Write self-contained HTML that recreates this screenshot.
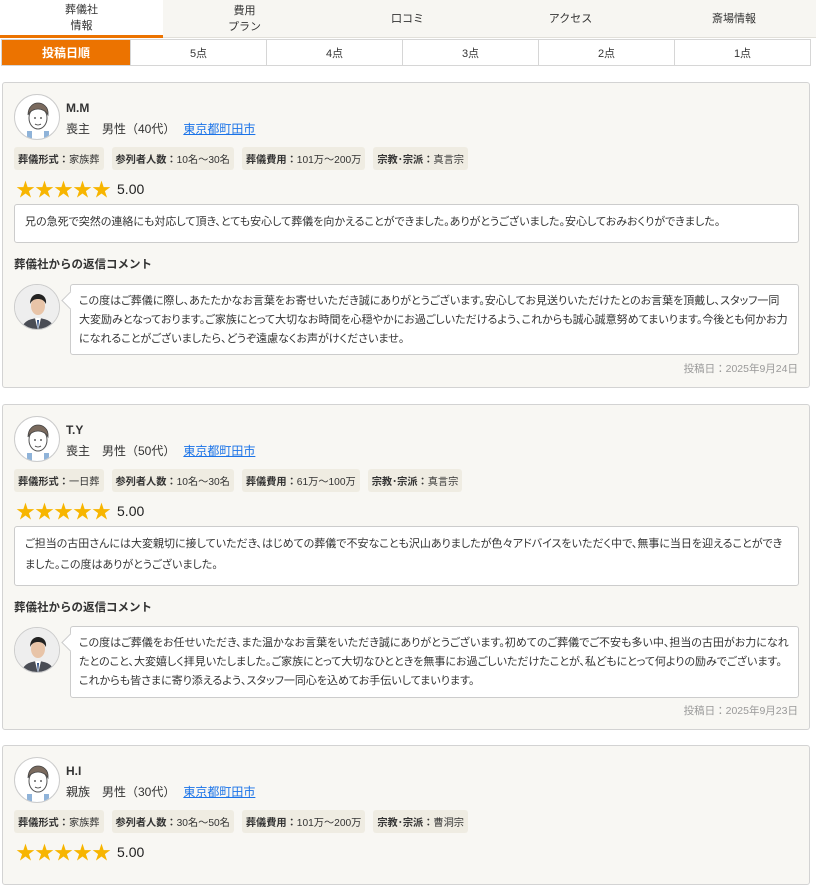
<!DOCTYPE html>
<html><head><meta charset="utf-8"><style>
*{box-sizing:border-box;margin:0;padding:0}
body{width:816px;height:867px;overflow:hidden;background:#fff;font-family:"Liberation Sans","Noto Sans CJK JP",sans-serif;color:#333;font-size:12px;position:relative}
.tabs{position:absolute;left:0;top:0;width:816px;height:38px;background:#f7f6f2;border-bottom:1px solid #e2e0da}
.tab{position:absolute;top:0;height:38px;display:flex;align-items:center;justify-content:center;text-align:center;font-size:11px;line-height:16px;color:#333}
.tab.act{background:#fff;border-bottom:3px solid #ec7300}
.sort{position:absolute;left:1px;top:39px;width:810px;height:27px;display:flex;border:1px solid #d6d6d6;background:#fff}
.sort div{flex:1;display:flex;align-items:center;justify-content:center;font-size:11px;border-left:1px solid #d6d6d6;color:#333}
.sort div.on{flex:0 0 128px;background:#ec7300;color:#fff;font-weight:bold;font-size:12px;border-left:none}
.card{position:absolute;left:2px;width:808px;background:#f8f7f3;border:1px solid #d3d3d3;border-radius:3px}
.av{position:absolute;left:11px;width:46px;height:46px;border-radius:50%;background:#fff;border:1px solid #ccc;overflow:hidden}
.name{position:absolute;left:63px;font-size:12px;font-weight:bold;color:#333}
.meta{position:absolute;left:63px;font-size:12px;color:#333}
.meta a{color:#1a73e8;text-decoration:underline;margin-left:8px}
.tags{position:absolute;left:11px;display:flex;gap:8px}
.tag{background:#efece2;border-radius:3px;height:23px;padding:0 4px;display:flex;align-items:center;font-size:10.2px;color:#333}
.tag b{font-weight:bold}
.stars{position:absolute;left:13px;display:flex;align-items:center;color:#f7b500;font-size:19px}
.stars span{font-size:14px;color:#222;margin-left:6px}
.box{position:absolute;left:11px;width:785px;background:#fff;border:1px solid #ccc;border-radius:3px;padding:8px 10px;font-size:11px;line-height:21px;color:#333;font-feature-settings:"palt"}
.rt{position:absolute;left:11px;font-size:11.5px;font-weight:bold;color:#333}
.bub{position:absolute;left:67px;width:729px;background:#fff;border:1px solid #ccc;border-radius:3px;padding:7px 8px;font-size:11px;line-height:19px;color:#333;font-feature-settings:"palt"}
.bub:before{content:"";position:absolute;left:-7px;top:9px;width:12px;height:12px;background:#fff;border-left:1px solid #ccc;border-bottom:1px solid #ccc;transform:rotate(45deg)}
.date{position:absolute;right:11px;font-size:10.5px;color:#999}
</style></head><body>
<div class="tabs">
<div class="tab act" style="left:0;width:163px">葬儀社<br>情報</div>
<div class="tab" style="left:163px;width:163px">費用<br>プラン</div>
<div class="tab" style="left:326px;width:163px">口コミ</div>
<div class="tab" style="left:489px;width:163px">アクセス</div>
<div class="tab" style="left:652px;width:164px">斎場情報</div>
</div>
<div class="sort"><div class="on">投稿日順</div><div>5点</div><div>4点</div><div>3点</div><div>2点</div><div>1点</div></div>

<div class="card" style="top:82px;height:306px">
<div class="av" style="top:11px"><svg width="46" height="46" viewBox="0 0 46 46"><rect x="12" y="36" width="22" height="12" fill="#8fb3d9"/><path d="M17 34h12v14H17z" fill="#fff"/><ellipse cx="23" cy="23" rx="9" ry="11" fill="#fff" stroke="#555" stroke-width="1"/><path d="M13 20c0-9 6-12 10-12s11 3 10 12c-2-4-6-6-10-6s-8 2-10 6z" fill="#7a6a5e" stroke="#444" stroke-width=".8"/><circle cx="20" cy="23" r=".9" fill="#333"/><circle cx="26" cy="23" r=".9" fill="#333"/><path d="M20 29q3 2 6 0" stroke="#333" fill="none" stroke-width=".8"/></svg></div>
<div class="name" style="top:18px">M.M</div>
<div class="meta" style="top:37px">喪主　男性（40代）<a>東京都町田市</a></div>
<div class="tags" style="top:64px"><div class="tag"><b>葬儀形式：</b>家族葬</div><div class="tag"><b>参列者人数：</b>10名～30名</div><div class="tag"><b>葬儀費用：</b>101万～200万</div><div class="tag"><b>宗教･宗派：</b>真言宗</div></div>
<div class="stars" style="top:92px">★★★★★<span>5.00</span></div>
<div class="box" style="top:121px;height:39px;padding-top:7px">兄の急死で突然の連絡にも対応して頂き、とても安心して葬儀を向かえることができました。ありがとうございました。安心しておみおくりができました。</div>
<div class="rt" style="top:173px">葬儀社からの返信コメント</div>
<div class="av" style="top:201px"><svg width="46" height="46" viewBox="0 0 46 46"><rect width="46" height="46" fill="#eee"/><path d="M6 46c2-10 8-12 17-13 9 1 15 3 17 13z" fill="#4a4d55"/><path d="M20 33l3 13 3-13z" fill="#fff"/><path d="M22 35h2l-1 11z" fill="#2a4a80"/><ellipse cx="23" cy="21" rx="7" ry="9" fill="#e8c4a8"/><path d="M15 19c0-7 4-10 8-10s9 3 8 10c-2-4-5-5-8-5s-6 1-8 5z" fill="#222"/></svg></div>
<div class="bub" style="top:201px;height:71px">この度はご葬儀に際し、あたたかなお言葉をお寄せいただき誠にありがとうございます。安心してお見送りいただけたとのお言葉を頂戴し、スタッフ一同大変励みとなっております。ご家族にとって大切なお時間を心穏やかにお過ごしいただけるよう、これからも誠心誠意努めてまいります。今後とも何かお力になれることがございましたら、どうぞ遠慮なくお声がけくださいませ。</div>
<div class="date" style="top:278px">投稿日：2025年9月24日</div>
</div>

<div class="card" style="top:404px;height:326px">
<div class="av" style="top:11px"><svg width="46" height="46" viewBox="0 0 46 46"><rect x="12" y="36" width="22" height="12" fill="#8fb3d9"/><path d="M17 34h12v14H17z" fill="#fff"/><ellipse cx="23" cy="23" rx="9" ry="11" fill="#fff" stroke="#555" stroke-width="1"/><path d="M13 20c0-9 6-12 10-12s11 3 10 12c-2-4-6-6-10-6s-8 2-10 6z" fill="#7a6a5e" stroke="#444" stroke-width=".8"/><circle cx="20" cy="23" r=".9" fill="#333"/><circle cx="26" cy="23" r=".9" fill="#333"/><path d="M20 29q3 2 6 0" stroke="#333" fill="none" stroke-width=".8"/></svg></div>
<div class="name" style="top:18px">T.Y</div>
<div class="meta" style="top:37px">喪主　男性（50代）<a>東京都町田市</a></div>
<div class="tags" style="top:64px"><div class="tag"><b>葬儀形式：</b>一日葬</div><div class="tag"><b>参列者人数：</b>10名～30名</div><div class="tag"><b>葬儀費用：</b>61万～100万</div><div class="tag"><b>宗教･宗派：</b>真言宗</div></div>
<div class="stars" style="top:92px">★★★★★<span>5.00</span></div>
<div class="box" style="top:121px;height:60px;padding-top:7px">ご担当の古田さんには大変親切に接していただき、はじめての葬儀で不安なことも沢山ありましたが色々アドバイスをいただく中で、無事に当日を迎えることができました。この度はありがとうございました。</div>
<div class="rt" style="top:194px">葬儀社からの返信コメント</div>
<div class="av" style="top:222px"><svg width="46" height="46" viewBox="0 0 46 46"><rect width="46" height="46" fill="#eee"/><path d="M6 46c2-10 8-12 17-13 9 1 15 3 17 13z" fill="#4a4d55"/><path d="M20 33l3 13 3-13z" fill="#fff"/><path d="M22 35h2l-1 11z" fill="#2a4a80"/><ellipse cx="23" cy="21" rx="7" ry="9" fill="#e8c4a8"/><path d="M15 19c0-7 4-10 8-10s9 3 8 10c-2-4-5-5-8-5s-6 1-8 5z" fill="#222"/></svg></div>
<div class="bub" style="top:221px;height:72px">この度はご葬儀をお任せいただき、また温かなお言葉をいただき誠にありがとうございます。初めてのご葬儀でご不安も多い中、担当の古田がお力になれたとのこと、大変嬉しく拝見いたしました。ご家族にとって大切なひとときを無事にお過ごしいただけたことが、私どもにとって何よりの励みでございます。これからも皆さまに寄り添えるよう、スタッフ一同心を込めてお手伝いしてまいります。</div>
<div class="date" style="top:298px">投稿日：2025年9月23日</div>
</div>

<div class="card" style="top:745px;height:140px">
<div class="av" style="top:11px"><svg width="46" height="46" viewBox="0 0 46 46"><rect x="12" y="36" width="22" height="12" fill="#8fb3d9"/><path d="M17 34h12v14H17z" fill="#fff"/><ellipse cx="23" cy="23" rx="9" ry="11" fill="#fff" stroke="#555" stroke-width="1"/><path d="M13 20c0-9 6-12 10-12s11 3 10 12c-2-4-6-6-10-6s-8 2-10 6z" fill="#7a6a5e" stroke="#444" stroke-width=".8"/><circle cx="20" cy="23" r=".9" fill="#333"/><circle cx="26" cy="23" r=".9" fill="#333"/><path d="M20 29q3 2 6 0" stroke="#333" fill="none" stroke-width=".8"/></svg></div>
<div class="name" style="top:18px">H.I</div>
<div class="meta" style="top:37px">親族　男性（30代）<a>東京都町田市</a></div>
<div class="tags" style="top:64px"><div class="tag"><b>葬儀形式：</b>家族葬</div><div class="tag"><b>参列者人数：</b>30名～50名</div><div class="tag"><b>葬儀費用：</b>101万～200万</div><div class="tag"><b>宗教･宗派：</b>曹洞宗</div></div>
<div class="stars" style="top:92px">★★★★★<span>5.00</span></div>
</div>
</body></html>
